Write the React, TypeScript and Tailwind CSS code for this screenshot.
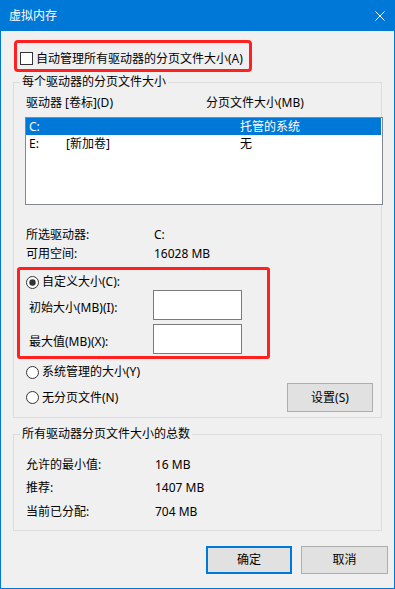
import React from 'react';

function Radio({ checked }: { checked?: boolean }) {
  return (
    <svg width="13" height="13" viewBox="0 0 13 13" className="shrink-0">
      <circle cx="6.5" cy="6.5" r="6" fill="#fff" stroke="#333" strokeWidth="1" />
      {checked && <circle cx="6.5" cy="6.5" r="3.2" fill="#333" />}
    </svg>
  );
}

function InfoRow({ label, value, labelW, className }: { label: string; value: string; labelW: string; className: string }) {
  return (
    <div className={`flex h-[16px] items-center leading-[16px] ${className}`}>
      <span className={labelW}>{label}</span>
      <span>{value}</span>
    </div>
  );
}

export default function App() {
  return (
    <div className="w-[395px] h-[589px] bg-[#f0f0f0] border-x border-b border-[#0078d7] flex flex-col text-[12px] text-black font-['Noto_Sans','Noto_Sans_CJK_SC',sans-serif] overflow-hidden">
      {/* title bar */}
      <div className="h-[31px] shrink-0 bg-[#0078d7] flex items-center justify-between pl-[8px] pr-[8px] text-white">
        <span className="leading-[16px]">虚拟内存</span>
        <svg width="10" height="10" viewBox="0 0 10 10" className="mr-[1px]">
          <path d="M0.5 0.5L9.5 9.5M9.5 0.5L0.5 9.5" stroke="#fff" strokeWidth="1" />
        </svg>
      </div>

      {/* auto manage checkbox */}
      <div className="ml-[13px] mt-[9px] w-[238px] h-[32px] border-[3px] border-[#ff2020] rounded-[4px] flex items-start pl-[3px] pt-[9px]">
        <span className="w-[13px] h-[13px] border border-[#333] bg-white shrink-0" />
        <span className="ml-[3px] leading-[14px]">自动管理所有驱动器的分页文件大小(A)</span>
      </div>

      {/* per-drive group */}
      <fieldset className="ml-[12px] mt-[2px] w-[369px] min-w-0 border border-[#dcdcdc] pb-[5px]">
        <legend className="ml-[6px] px-[2px] leading-[16px]">每个驱动器的分页文件大小</legend>
        <div className="mt-[5px] flex h-[16px] leading-[16px] pl-[12px]">
          <span className="w-[180px]">驱动器 [卷标](D)</span>
          <span>分页文件大小(MB)</span>
        </div>
        <div className="mt-[6px] ml-[11px] w-[358px] h-[88px] border border-[#828790] bg-white pr-[1px]">
          <div className="flex h-[17px] items-center bg-[#0078d7] text-white pl-[3px]">
            <span className="w-[211px]">C:</span>
            <span>托管的系统</span>
          </div>
          <div className="flex h-[17px] items-center pl-[3px]">
            <span className="w-[37px]">E:</span>
            <span className="w-[174px]">[新加卷]</span>
            <span>无</span>
          </div>
        </div>

        <InfoRow className="mt-[22px] pl-[12px]" labelW="w-[128px]" label="所选驱动器:" value="C:" />
        <InfoRow className="mt-[3px] pl-[12px]" labelW="w-[128px]" label="可用空间:" value="16028 MB" />

        <div className="mt-[5px] ml-[3px] w-[253px] h-[92px] border-[3px] border-[#ff2020] rounded-[3px] pt-[4px] pl-[6px]">
          <div className="flex h-[16px] items-center">
            <Radio checked />
            <span className="ml-[3px] leading-[16px]">自定义大小(C):</span>
          </div>
          <div className="flex h-[30px] items-center pl-[3px]">
            <span className="w-[124px] pt-[5px] leading-[16px]">初始大小(MB)(I):</span>
            <div className="w-[89px] h-[30px] border border-[#7a7a7a] bg-white" />
          </div>
          <div className="mt-[4px] flex h-[30px] items-center pl-[3px]">
            <span className="w-[124px] pt-[6px] leading-[16px]">最大值(MB)(X):</span>
            <div className="w-[89px] h-[30px] border border-[#7a7a7a] bg-white" />
          </div>
        </div>

        <div className="mt-[5px] flex h-[16px] items-center pl-[12px]">
          <Radio />
          <span className="ml-[3px] leading-[16px]">系统管理的大小(Y)</span>
        </div>
        <div className="mt-[3px] flex h-[29px] items-center justify-between pl-[12px] pr-[8px]">
          <div className="flex items-center">
            <Radio />
            <span className="ml-[3px] leading-[16px]">无分页文件(N)</span>
          </div>
          <button className="w-[86px] h-[29px] bg-[#e1e1e1] border border-[#adadad] leading-[16px]">设置(S)</button>
        </div>
      </fieldset>

      {/* totals group */}
      <fieldset className="ml-[12px] mt-[8px] w-[369px] min-w-0 border border-[#dcdcdc] pb-[10px]">
        <legend className="ml-[6px] px-[2px] leading-[16px]">所有驱动器分页文件大小的总数</legend>
        <InfoRow className="mt-[15px] pl-[12px]" labelW="w-[129px]" label="允许的最小值:" value="16 MB" />
        <InfoRow className="mt-[7px] pl-[12px]" labelW="w-[129px]" label="推荐:" value="1407 MB" />
        <InfoRow className="mt-[8px] pl-[12px]" labelW="w-[129px]" label="当前已分配:" value="704 MB" />
      </fieldset>

      <div className="mt-[15px] flex justify-end gap-[9px] pr-[6px]">
        <button className="w-[86px] h-[28px] bg-[#e1e1e1] border-2 border-[#0078d7] leading-[16px]">确定</button>
        <button className="w-[87px] h-[28px] bg-[#e1e1e1] border border-[#adadad] leading-[16px]">取消</button>
      </div>
    </div>
  );
}
